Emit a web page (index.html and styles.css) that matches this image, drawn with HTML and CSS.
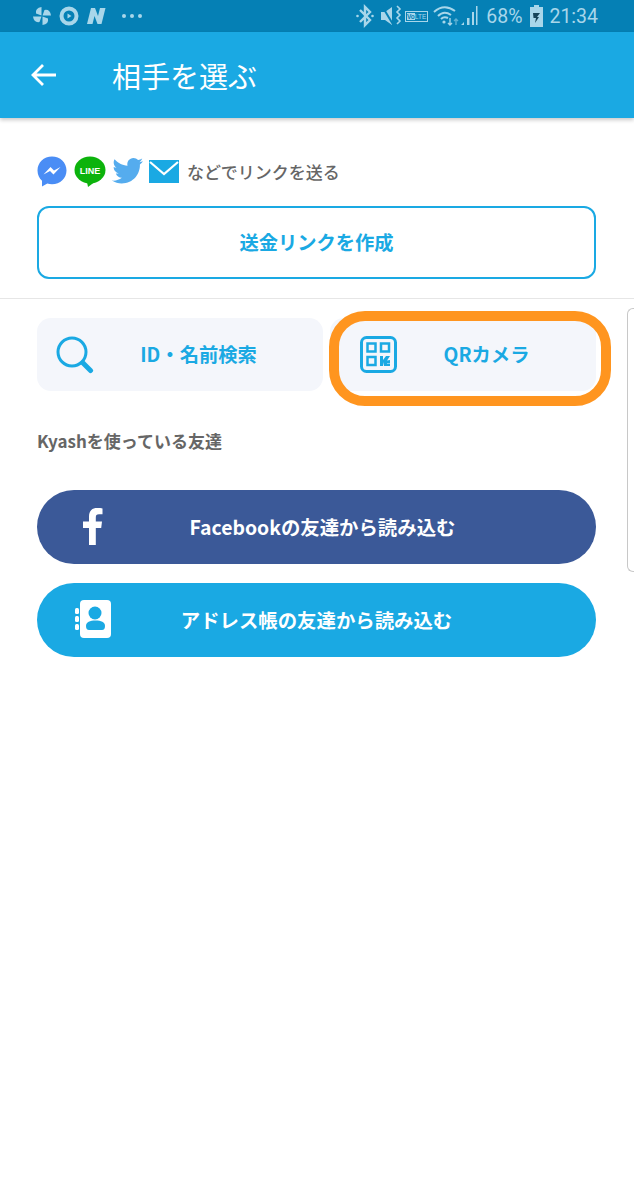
FILE: index.html
```html
<!DOCTYPE html>
<html lang="ja">
  <head>
    <title>相手を選ぶ</title>
    <link rel="stylesheet" href="styles.css">
  </head>
  <body>
    <div class="phone">
      <div class="statusbar">
        <div class="status-left">
          <svg width="20" height="20" viewBox="0 0 20 20"><g fill="#a8d6ea"><path d="M9.500 9.500V1Q3 2 4 7.500Z"/><path d="M10.500 9.500H19Q18 3 12.500 4Z"/><path d="M10.500 10.500V19Q17 18 16 12.500Z"/><path d="M9.500 10.500H1Q2 17 7.500 16Z"/></g></svg>
          <svg width="20" height="20" viewBox="0 0 20 20"><circle cx="10" cy="10" r="7.500" fill="none" stroke="#a8d6ea" stroke-width="4"/><path d="M8.500 7.500V12.500L12.500 10Z" fill="#a8d6ea"/></svg>
          <svg width="20" height="20" viewBox="0 0 20 20"><path d="M1 18L5 2H9L12 10L14 2H19.500L15.500 18H11.500L8.500 10L6.500 18Z" fill="#a8d6ea"/></svg>
          <div class="st-dots"><span></span><span></span><span></span></div>
        </div>
        <div class="status-right">
          <svg class="st-bt" width="18" height="26" viewBox="0 0 18 26"><path d="M4 7L14 17L9 22V4L14 9L4 19" fill="none" stroke="#a8d6ea" stroke-width="2.400"/><circle cx="1.500" cy="13" r="1.300" fill="#a8d6ea"/><circle cx="16.500" cy="13" r="1.300" fill="#a8d6ea"/></svg>
          <svg class="st-mute" width="21" height="24" viewBox="0 0 21 24"><path d="M0 8H4L11 3V21L4 16H0Z" fill="#a8d6ea"/><path d="M1 2L13 22" stroke="#0580b5" stroke-width="2"/><path d="M16 2L19 5L16 8L19 11L16 14L19 17L16 20" fill="none" stroke="#a8d6ea" stroke-width="1.600"/></svg>
          <span class="volte"><b>Vo</b>LTE</span>
          <svg class="st-wifi" width="28" height="26" viewBox="0 0 28 26"><path d="M1 9Q11 0 22 8M5 13Q11 7 18 12M8 16Q11 13 15 15" fill="none" stroke="#a8d6ea" stroke-width="2"/><circle cx="11" cy="19" r="1.600" fill="#a8d6ea"/><path d="M17 15V22M15 20L17 22L19 20" fill="none" stroke="#a8d6ea" stroke-width="1.400"/><path d="M23 22V16M21 18L23 16L25 18" fill="none" stroke="#5fb0d3" stroke-width="1.400"/></svg>
          <svg class="st-signal" width="18" height="24" viewBox="0 0 18 24"><path d="M1 21L4 18V21ZM7 21V14H9.500V21ZM12 21V8H14V21ZM16 21V2H17.500V21Z" fill="#a8d6ea"/></svg>
          <span class="st-text st-pct">68%</span>
          <svg class="st-batt" width="13" height="22" viewBox="0 0 13 22"><path d="M4 0H9V2H13V22H0V2H4Z" fill="#a8d6ea"/><path d="M3 8H10L7 12H9L5 18L6 13H3.500Z" fill="#17445a"/></svg>
          <span class="st-text st-time">21:34</span>
        </div>
      </div>

      <header class="appbar">
        <svg class="back" width="26" height="24" viewBox="0 0 26 24"><path d="M25 12H3M12 2L2 12L12 22" fill="none" stroke="#fff" stroke-width="2.800"/></svg>
        <h1 class="title">相手を選ぶ</h1>
      </header>

      <section class="link-section">
        <div class="share-row">
          <svg width="30" height="31" viewBox="0 0 30 31"><path d="M15 0.500C6.800 0.500 0.500 6.500 0.500 14.500C0.500 18.700 2.300 22.300 5 24.700V30.500L10.300 27.500C11.800 28 13.300 28.300 15 28.300C23.200 28.300 29.500 22.300 29.500 14.500C29.500 6.500 23.200 0.500 15 0.500Z" fill="#4a8df5"/><path d="M6.500 18.500L13.500 11L17 14.500L23.500 11L16.500 18.500L13 15Z" fill="#fff"/></svg>
          <svg class="gap-line" width="32" height="31" viewBox="0 0 32 31"><ellipse cx="16" cy="14" rx="15.500" ry="13.500" fill="#0cb30c"/><path d="M13 26L14 31L22 25Z" fill="#0cb30c"/><text x="16" y="17.500" class="line-text" text-anchor="middle">LINE</text></svg>
          <svg class="gap-tw" width="31" height="26" viewBox="0 0 24 20"><path d="M24 2.400C23.100 2.800 22.200 3 21.200 3.200C22.200 2.500 23 1.500 23.400 0.300C22.400 0.900 21.300 1.300 20.200 1.500C19.300 0.600 18 0 16.600 0C13.500 0 11.300 2.900 12 5.900C8 5.700 4.400 3.800 2 0.900C0.700 3.100 1.300 6 3.500 7.500C2.700 7.500 2 7.200 1.300 6.900C1.200 9.200 2.900 11.300 5.200 11.800C4.500 12 3.700 12 3 11.900C3.600 13.800 5.400 15.300 7.600 15.300C5.500 17 2.700 17.700 0 17.400C2.200 18.900 4.900 19.700 7.500 19.700C16.700 19.700 21.900 12 21.600 5C22.500 4.300 23.400 3.400 24 2.400Z" fill="#55acee"/></svg>
          <svg class="gap-mail" width="30" height="23" viewBox="0 0 30 23"><path d="M0 0H30V23H0Z" fill="#1aa9e3"/><path d="M1 2L15 14L29 2" fill="none" stroke="#fff" stroke-width="2.200"/></svg>
          <span class="share-text">などでリンクを送る</span>
        </div>
        <a class="link-button">送金リンクを作成</a>
      </section>

      <section class="friend-section">
        <div class="search-row">
          <div class="search-card">
            <svg class="card-icon" width="38" height="38" viewBox="0 0 38 38"><circle cx="16" cy="16" r="14" fill="none" stroke="#1aa9e3" stroke-width="3"/><path d="M27 27L34.500 34.500" stroke="#1aa9e3" stroke-width="5" stroke-linecap="round"/></svg>
            <span class="card-label">ID・名前検索</span>
          </div>
          <div class="search-card qr-card">
            <svg class="card-icon" width="37" height="37" viewBox="0 0 37 37"><rect x="1.500" y="1.500" width="34" height="34" rx="5" fill="none" stroke="#1aa9e3" stroke-width="3"/><g fill="none" stroke="#1aa9e3" stroke-width="2.500"><rect x="7.500" y="7.500" width="8" height="8"/><rect x="21" y="7.500" width="8" height="8"/><rect x="7.500" y="21" width="8" height="8"/></g><path d="M20 20H23V24L26 20H30L27 24.500L30 24V27H27V30H24V26L23 30H20ZM27 27.500H30V30H27Z" fill="#1aa9e3"/></svg>
            <span class="card-label">QRカメラ</span>
          </div>
          <div class="highlight"></div>
        </div>

        <h2 class="friends-title">Kyashを使っている友達</h2>

        <a class="pill fb">
          <svg class="pill-icon" width="20" height="37" viewBox="0 0 20 37"><path d="M6 37V20H0V13.500H6V8.500C6 2.500 9.500 0 14 0C16.500 0 18.500 0.200 19.500 0.400V6.300H16C13.500 6.300 12.800 7.500 12.800 9.500V13.500H19L18.200 20H12.800V37Z" fill="#fff"/></svg>
          <span>Facebookの友達から読み込む</span>
        </a>
        <a class="pill contacts">
          <svg class="pill-icon" width="36" height="38" viewBox="0 0 36 38"><rect x="5" y="0" width="31" height="38" rx="4" fill="#fff"/><g fill="#fff"><rect x="0" y="8" width="4" height="6" rx="1.500"/><rect x="0" y="16" width="4" height="6" rx="1.500"/><rect x="0" y="24" width="4" height="6" rx="1.500"/></g><circle cx="20" cy="13" r="6.500" fill="#1aa9e3"/><path d="M11 26C11 22 15 20.500 20.500 20.500C26 20.500 30 22 30 26C30 28.500 29 30 27 30H14C12 30 11 28.500 11 26Z" fill="#1aa9e3"/></svg>
          <span>アドレス帳の友達から読み込む</span>
        </a>
      </section>

      <div class="side-handle"></div>
    </div>
  </body>
</html>
```
FILE: styles.css
```css
html, body {
  margin: 0;
  padding: 0;
  background: #fff;
}

.phone {
  position: relative;
  width: 634px;
  height: 1200px;
  overflow: hidden;
  font-family: "Noto Sans CJK JP", "Noto Sans", sans-serif;
}

.statusbar {
  height: 32px;
  background: #0580b5;
  display: flex;
  justify-content: space-between;
  align-items: center;
  padding: 0 36px 0 32px;
}

.status-left, .status-right {
  display: flex;
  align-items: center;
}

.status-left {
  gap: 7px;
}

.st-dots {
  display: flex;
  gap: 4px;
  margin-left: 9px;
}

.st-dots span {
  width: 4px;
  height: 4px;
  border-radius: 50%;
  background: #a8d6ea;
}

.st-mute { margin-left: 7px; }
.volte { margin-left: 3px; }
.st-wifi { margin-left: 5px; }
.st-signal { margin-left: -1px; }
.st-pct { margin-left: 8px; }
.st-batt { margin-left: 8px; }
.st-time { margin-left: 6px; }

.volte {
  font-family: "Liberation Sans", sans-serif;
  font-size: 6.500px;
  color: #a8d6ea;
  border: 1px solid #a8d6ea;
  padding: 0 1px;
  line-height: 9px;
}

.volte b {
  background: #a8d6ea;
  color: #0580b5;
}

.st-text {
  font-family: Roboto, sans-serif;
  color: #a8d6ea;
  font-size: 19.500px;
}

.appbar {
  height: 86px;
  background: #1aa9e3;
  display: flex;
  align-items: center;
  padding-left: 31px;
  box-shadow: 0 2px 4px rgba(0, 0, 0, 0.22);
}

.title {
  margin: 0 0 0 55px;
  font-size: 29px;
  font-weight: 400;
  color: #fff;
}

.link-section {
  height: 180px;
  padding: 0 38px 0 37px;
  border-bottom: 1px solid #e6e6e6;
}

.share-row {
  display: flex;
  align-items: center;
  height: 36px;
  padding-top: 35px;
}

.gap-line { margin-left: 7px; }
.gap-tw { margin-left: 6px; }
.gap-mail { margin-left: 6px; }

.line-text {
  font-family: "Liberation Sans", sans-serif;
  font-size: 9px;
  font-weight: 700;
  fill: #fff;
}

.share-text {
  margin-left: 8px;
  font-size: 17px;
  font-weight: 500;
  color: #666;
}

.link-button {
  display: flex;
  align-items: center;
  justify-content: center;
  height: 68px;
  padding-bottom: 1px;
  margin-top: 17px;
  border: 2px solid #1aa9e3;
  border-radius: 12px;
  color: #1aa9e3;
  font-size: 19.300px;
  line-height: 24px;
  font-weight: 700;
}

.friend-section {
  padding: 19px 38px 0 37px;
}

.search-row {
  position: relative;
  display: flex;
  gap: 7px;
}

.search-card {
  flex: 286px 0 0;
  height: 73px;
  display: flex;
  align-items: center;
  background: #f4f6fb;
  border-radius: 14px;
  padding-left: 19px;
  box-sizing: border-box;
}

.qr-card {
  flex: 266px 0 0;
  padding-left: 30px;
}

.card-label {
  flex: 1;
  text-align: center;
  color: #1aa9e3;
  font-size: 19.300px;
  line-height: 24px;
  font-weight: 700;
  padding-right: 20px;
  padding-bottom: 2px;
}

.highlight {
  position: absolute;
  left: 292px;
  top: -7px;
  width: 282px;
  height: 95px;
  box-sizing: border-box;
  border: 10px solid #ff951f;
  border-radius: 36px;
}

.friends-title {
  margin: 37px 0 37px;
  font-size: 17px;
  line-height: 25px;
  font-weight: 700;
  color: #666;
}

.pill {
  display: flex;
  align-items: center;
  justify-content: center;
  position: relative;
  height: 74px;
  margin-bottom: 19px;
  border-radius: 37px;
  color: #fff;
  font-size: 19.400px;
  line-height: 26px;
  font-weight: 700;
}

.pill-icon {
  position: absolute;
  top: 18px;
}

.fb { background: #3b5998; padding-left: 12px; }
.fb .pill-icon { left: 46px; }
.contacts { background: #1aa9e3; }
.contacts .pill-icon { left: 38px; top: 17px; }

.side-handle {
  position: absolute;
  right: 0;
  top: 308px;
  width: 7px;
  height: 264px;
  box-sizing: border-box;
  border: 1px solid #c8c8c8;
  border-right: none;
  border-radius: 6px 0 0 6px;
  background: #fff;
}
```
